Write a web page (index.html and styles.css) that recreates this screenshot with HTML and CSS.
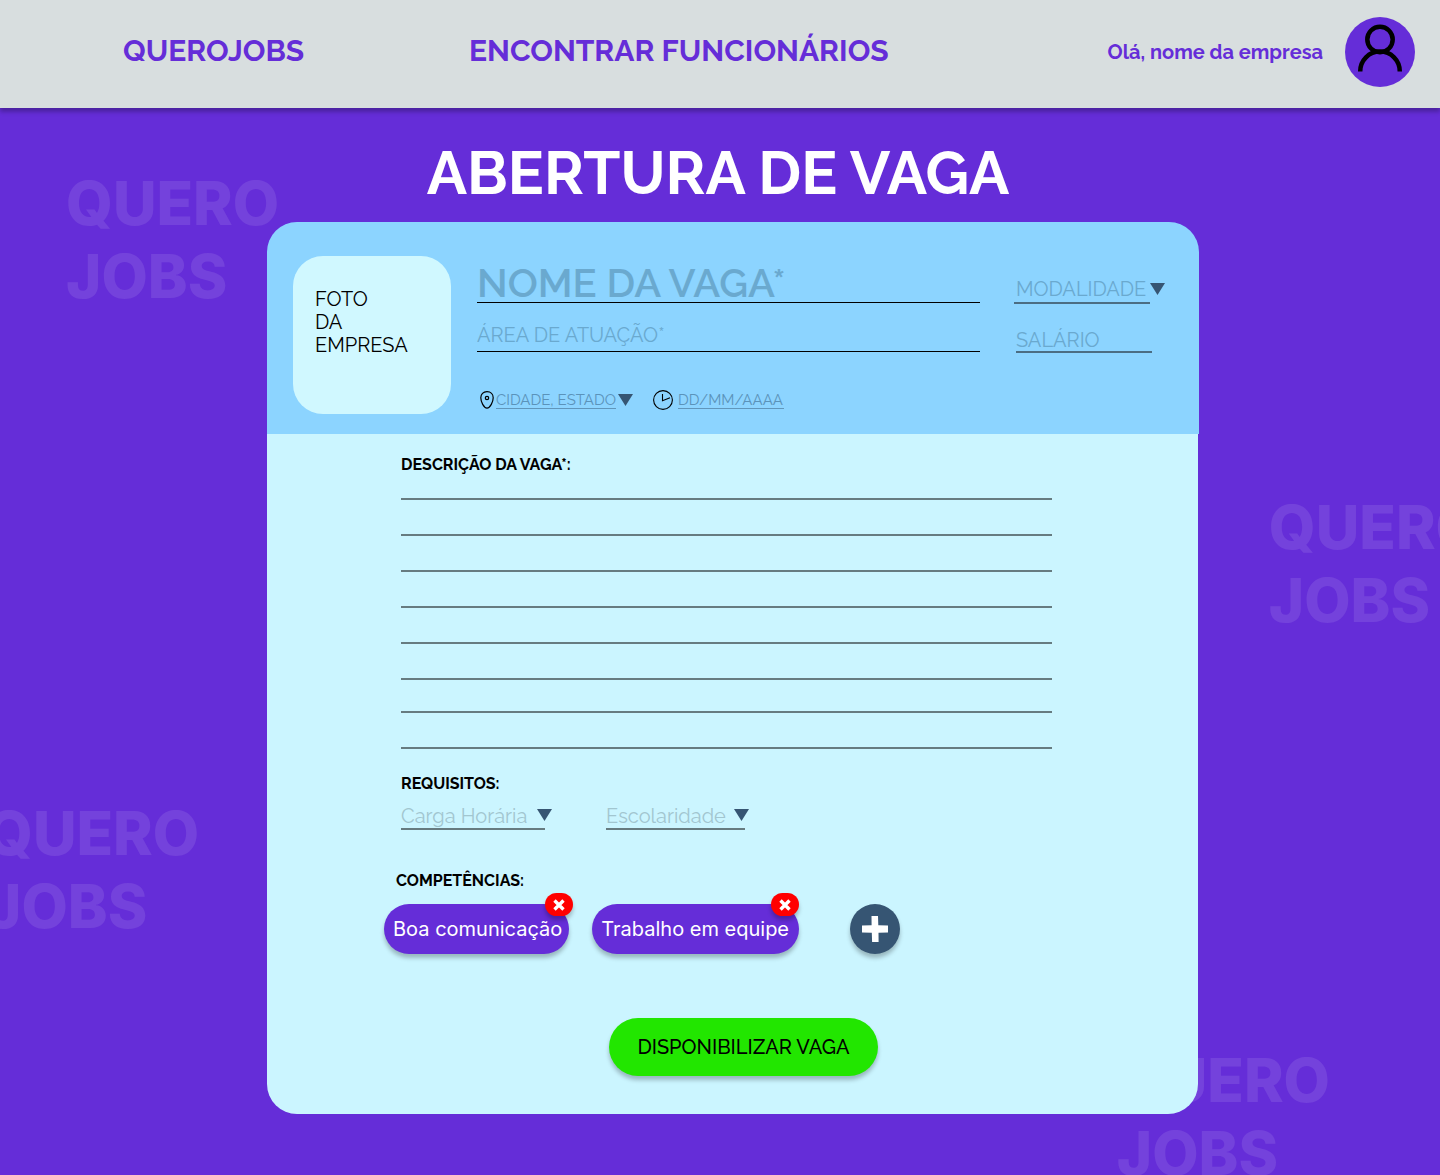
FILE: index.html
```html
<!DOCTYPE html>
<html lang="pt-BR">
<head>
<meta charset="utf-8">
<meta name="viewport" content="width=device-width, initial-scale=1">
<title>QueroJobs - Abertura de vaga</title>
<link rel="stylesheet" href="styles.css">
</head>
<body>
<header class="topbar">
  <a class="brand" href="#">QUEROJOBS</a>
  <a class="nav-link" href="#">ENCONTRAR FUNCIONÁRIOS</a>
  <span class="greeting">Olá, nome da empresa</span>
  <a class="avatar" href="#" aria-label="Perfil">
    <svg viewBox="0 0 70 70" width="70" height="70" fill="none" stroke="#000" stroke-width="4.500"><circle cx="35" cy="22.500" r="12.700"/><path d="M15.200 54.500C15.200 43.200 24 34.600 35 34.600S54.800 43.200 54.800 54.500"/></svg>
  </a>
</header>
<main class="page">
  <div class="watermark mark-a" aria-hidden="true">QUERO<br>JOBS</div>
  <div class="watermark mark-b" aria-hidden="true">QUERO<br>JOBS</div>
  <div class="watermark mark-c" aria-hidden="true">QUERO<br>JOBS</div>
  <div class="watermark mark-d" aria-hidden="true">QUERO<br>JOBS</div>
  <h1 class="title">ABERTURA DE VAGA</h1>
  <form class="card">
    <div class="card-head">
      <div class="photo">FOTO<br>DA<br>EMPRESA</div>
      <div class="fields">
        <input class="line-input job-name" type="text" aria-label="Nome da vaga" placeholder="NOME DA VAGA*">
        <input class="line-input job-area" type="text" aria-label="Área de atuação" placeholder="ÁREA DE ATUAÇÃO*">
        <div class="meta">
          <svg class="pin" viewBox="0 0 14 18" width="14" height="18" fill="none" stroke="#000" stroke-width="1.200"><path d="M7 .700C3.200.700.800 3.200.800 6.800c0 3.800 3 10.300 6.200 10.300s6.200-6.500 6.200-10.300C13.200 3.200 10.800.700 7 .700z"/><circle cx="7" cy="7" r="1.700"/></svg>
          <select class="small-field city" aria-label="Cidade, estado"><option>CIDADE, ESTADO</option></select>
          <svg class="arrow" viewBox="0 0 15 12" width="15" height="12"><path d="M0 0h15L7.500 12z"/></svg>
          <svg class="clock" viewBox="0 0 20 20" width="20" height="20" fill="none" stroke="#000" stroke-width="1.100"><circle cx="10" cy="10" r="9.400"/><path d="M9.500 4v6.800l7.500-3"/></svg>
          <input class="small-field date" type="text" aria-label="Data" placeholder="DD/MM/AAAA">
        </div>
      </div>
      <div class="side">
        <div class="picker mode"><select class="field" aria-label="Modalidade"><option>MODALIDADE</option></select><svg class="arrow" viewBox="0 0 15 12" width="15" height="12"><path d="M0 0h15L7.500 12z"/></svg></div>
        <input class="field salary" type="text" aria-label="Salário" placeholder="SALÁRIO">
      </div>
    </div>
    <div class="card-body">
      <label class="heading" for="description">DESCRIÇÃO DA VAGA*:</label>
      <textarea class="description" id="description"></textarea>
      <h2 class="heading">REQUISITOS:</h2>
      <div class="requirements">
        <div class="picker hours"><select class="field" aria-label="Carga horária"><option>Carga Horária</option></select><svg class="arrow" viewBox="0 0 15 12" width="15" height="12"><path d="M0 0h15L7.500 12z"/></svg></div>
        <div class="picker school"><select class="field" aria-label="Escolaridade"><option>Escolaridade</option></select><svg class="arrow" viewBox="0 0 15 12" width="15" height="12"><path d="M0 0h15L7.500 12z"/></svg></div>
      </div>
      <div class="skills">
        <h2 class="heading skills-title">COMPETÊNCIAS:</h2>
        <div class="chips">
          <div class="chip short">Boa comunicação
            <button class="remove" type="button" aria-label="Remover Boa comunicação"><svg viewBox="0 0 12 12" width="12" height="12" stroke="#fff" stroke-width="3.400"><path d="M1.500 1.500l9 9M10.500 1.500l-9 9"/></svg></button>
          </div>
          <div class="chip">Trabalho em equipe
            <button class="remove" type="button" aria-label="Remover Trabalho em equipe"><svg viewBox="0 0 12 12" width="12" height="12" stroke="#fff" stroke-width="3.400"><path d="M1.500 1.500l9 9M10.500 1.500l-9 9"/></svg></button>
          </div>
          <button class="add" type="button" aria-label="Adicionar competência"><svg viewBox="0 0 26 26" width="26" height="26" fill="#fff"><path d="M9.500 0h6.500l.300 9.200 9.700.300v7l-9.500.200.100 9.300h-6.500l-.300-9.300L0 16.400V9.500l9.600-.300z"/></svg></button>
        </div>
      </div>
      <button class="submit" type="submit">DISPONIBILIZAR VAGA</button>
    </div>
  </form>
</main>
</body>
</html>
```
FILE: styles.css
```css
* { box-sizing: border-box; }
body {
  margin: 0;
  background: #652dd8;
  color: #000;
  font-family: Raleway, Lato, sans-serif;
  font-size: 20px;
}
input, select, textarea, button {
  margin: 0;
  padding: 0;
  border: 0;
  border-radius: 0;
  background: none;
  color: inherit;
  font: inherit;
  outline: none;
}
select { appearance: none; }
button, select { cursor: pointer; }
svg { display: block; flex: none; }

.topbar {
  position: relative;
  z-index: 1;
  display: flex;
  align-items: center;
  height: 108px;
  padding: 0 25px 4px 123px;
  background: #d8dedf;
  box-shadow: 0 4px 4px rgba(0, 0, 0, .25);
  color: #652dd8;
  font-weight: 700;
}
.topbar a { color: inherit; text-decoration: none; }
.brand, .nav-link { padding-bottom: 4px; font-size: 30px; }
.brand { width: 346px; }
.greeting { margin-left: auto; margin-right: 22px; }
.avatar { border-radius: 50%; background: #652dd8; }

.page {
  position: relative;
  overflow: hidden;
  padding: 29px 241px 61px 267px;
}
.watermark {
  position: absolute;
  color: rgba(255, 255, 255, .1);
  font: 800 60px/73px Inter, sans-serif;
}
.mark-a { top: 59px; left: 66px; }
.mark-b { top: 383px; right: -42px; }
.mark-c { top: 689px; left: -14px; }
.mark-d { top: 936px; right: 110px; }

.title {
  margin: 0 0 13px;
  padding-right: 30px;
  color: #fff;
  font-size: 60px;
  line-height: 72px;
  text-align: center;
}

.card { position: relative; }
.card-head {
  display: grid;
  grid-template-columns: 158px 1fr 151px;
  height: 212px;
  padding: 34px 34px 0 26px;
  border-radius: 30px 30px 0 0;
  background: #8cd4ff;
}
.photo {
  height: 158px;
  padding: 32px 22px;
  border-radius: 30px;
  background: #d0f8ff;
  line-height: 23px;
}
.fields { margin: 0 34px 0 26px; }
.side { display: flex; flex-direction: column; padding-top: 18px; }

.line-input {
  display: block;
  width: 100%;
  border-bottom: 1px solid #000;
}
.job-name { height: 47px; padding-top: 6px; font-size: 40px; font-weight: 600; }
.job-area { height: 49px; padding-top: 16px; }
::placeholder { color: #6aa9cf; opacity: 1; }

.meta { display: flex; align-items: center; height: 24px; margin-top: 36px; padding-left: 3px; }
.small-field {
  height: 18px;
  border-bottom: 1px solid #6096bb;
  color: #5b93ba;
  font-size: 15px;
  line-height: 16px;
}
.small-field::placeholder { color: #5b93ba; }
.city { width: 120px; margin: 0 2px; }
.date { width: 106px; margin-left: 5px; }
.clock { margin-left: 20px; }
.arrow { fill: #365573; }

.field {
  height: 30px;
  padding-top: 3px;
  border-bottom: 2px solid #4b6d83;
  line-height: 25px;
}
.picker { display: flex; align-items: center; }
.picker .field { color: #6aa9cf; }
.mode .field { width: 136px; padding-left: 2px; }
.salary { width: 136px; margin: 19px 0 0 2px; padding-top: 5px; }

.card-body {
  display: flex;
  flex-direction: column;
  margin-right: 1px;
  padding: 20px 146px 38px 134px;
  border-radius: 0 0 30px 30px;
  background: #cbf5ff;
}
.heading { margin: 0; font-size: 16px; font-weight: 700; line-height: 22px; }
.description {
  height: 273px;
  margin-bottom: 24px;
  resize: none;
  line-height: 36px;
  background:
    repeating-linear-gradient(to top, #667b80 0 2px, transparent 2px 36px) top / 100% 204px no-repeat,
    repeating-linear-gradient(to top, #667b80 0 2px, transparent 2px 36px) bottom / 100% 69px no-repeat;
}
.requirements { display: flex; gap: 54px; margin-top: 5px; }
.requirements .field { padding-top: 5px; border-color: #667b80; color: #a2c6d0; line-height: 23px; }
.hours .field { width: 144px; }
.hours .arrow { margin-left: -8px; }
.school .field { width: 139px; }
.school .arrow { margin-left: -11px; }

.skills { margin: 40px 0 0 -17px; }
.skills-title { padding-left: 12px; }
.chips { display: flex; margin-top: 12px; }
.chip {
  position: relative;
  height: 50px;
  margin-right: 23px;
  padding: 0 10px 0 9px;
  border-radius: 25px;
  background: #652dd8;
  box-shadow: 0 4px 4px rgba(0, 0, 0, .25);
  color: #fff;
  font: 400 20px/50px Inter, sans-serif;
  white-space: nowrap;
}
.remove {
  position: absolute;
  top: -11px;
  right: 0;
  display: grid;
  place-items: center;
  width: 28px;
  height: 23px;
  border-radius: 12px;
  background: #f00;
  box-shadow: 0 4px 4px rgba(0, 0, 0, .25);
}
.short { padding-right: 7px; }
.short .remove { right: -4px; }
.add {
  display: grid;
  place-items: center;
  width: 50px;
  height: 50px;
  margin-left: 28px;
  border-radius: 50%;
  background: #365573;
  box-shadow: 0 4px 4px rgba(0, 0, 0, .25);
}
.submit {
  align-self: center;
  width: 269px;
  height: 58px;
  margin: 64px 0 0 34px;
  border-radius: 29px;
  background: #22e600;
  box-shadow: 0 4px 4px rgba(0, 0, 0, .25);
  font-weight: 500;
}

@media (max-width: 1100px) {
  .page { padding-left: 24px; padding-right: 24px; }
  .brand { width: auto; margin-right: 40px; }
  .card-body { padding-left: 60px; padding-right: 60px; }
}
```
